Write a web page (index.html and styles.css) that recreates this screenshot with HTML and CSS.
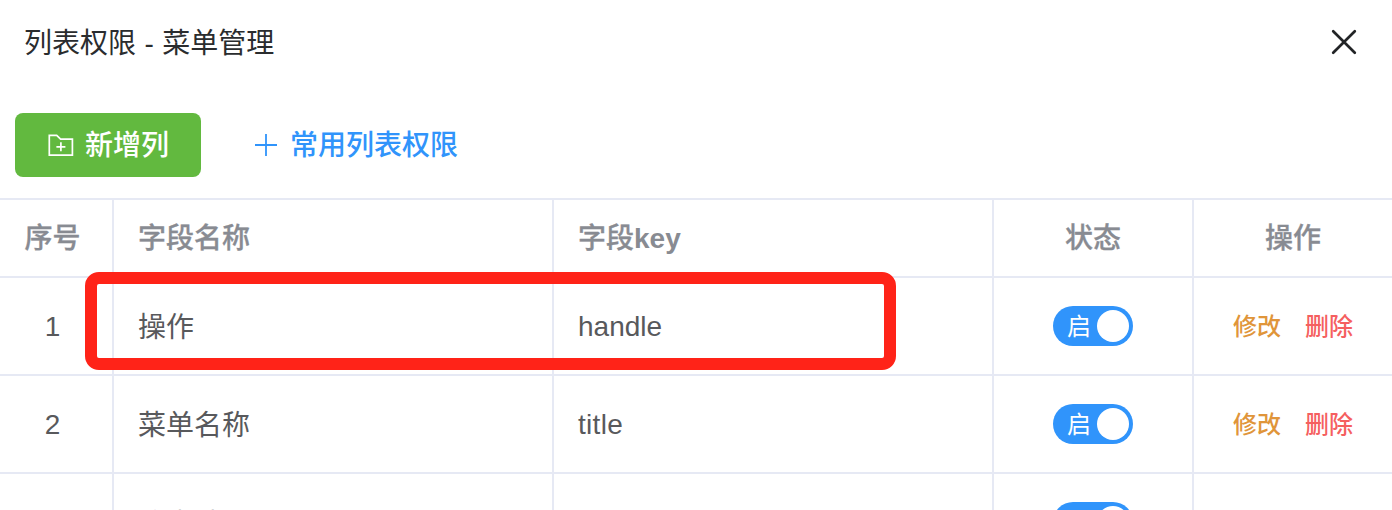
FILE: index.html
```html
<!DOCTYPE html>
<html lang="zh-CN">
<head>
<meta charset="utf-8">
<title>列表权限 - 菜单管理</title>
<link rel="stylesheet" href="styles.css">
</head>
<body>
<section class="dialog">
  <header class="dialog-header">
    <h1 class="title">列表权限 - 菜单管理</h1>
    <button class="close" aria-label="关闭">
      <svg width="28" height="28" viewBox="0 0 28 28" fill="none" stroke="#222426" stroke-width="2.7" stroke-linecap="round"><path d="M3.2 3.2 24.8 24.8M24.8 3.2 3.2 24.8"/></svg>
    </button>
  </header>
  <div class="toolbar">
    <button class="btn btn-success">
      <svg width="28" height="28" viewBox="0 0 28 28" fill="none" stroke="#fff" stroke-width="1.7"><path d="M2.3 4.4H9.7L13.6 8.1H25.4V24.1H2.3Z"/><path d="M13.9 11.3v9M9.4 15.8h9"/></svg>
      <span class="btn-text">新增列</span>
    </button>
    <button class="btn btn-link">
      <svg width="28" height="28" viewBox="0 0 28 28" fill="none" stroke="#3094fb" stroke-width="1.8"><path d="M14 3v22M3 14h22"/></svg>
      <span class="btn-text">常用列表权限</span>
    </button>
  </div>
  <div class="table">
    <div class="row head">
      <div class="cell index">序号</div>
      <div class="cell">字段名称</div>
      <div class="cell">字段<b>key</b></div>
      <div class="cell center">状态</div>
      <div class="cell center">操作</div>
    </div>
    <div class="row">
      <div class="cell index">1</div>
      <div class="cell name">操作</div>
      <div class="cell key">handle</div>
      <div class="cell center state"><span class="switch"><span class="switch-text">启</span><span class="knob"></span></span></div>
      <div class="cell center actions"><a class="edit">修改</a><a class="delete">删除</a></div>
    </div>
    <div class="row">
      <div class="cell index">2</div>
      <div class="cell name">菜单名称</div>
      <div class="cell key title-key">title</div>
      <div class="cell center state"><span class="switch"><span class="switch-text">启</span><span class="knob"></span></span></div>
      <div class="cell center actions"><a class="edit">修改</a><a class="delete">删除</a></div>
    </div>
    <div class="row">
      <div class="cell index"></div>
      <div class="cell name last-name">路由地址</div>
      <div class="cell key"></div>
      <div class="cell center state"><span class="switch"><span class="knob"></span></span></div>
      <div class="cell center actions"></div>
    </div>
    <div class="highlight"></div>
  </div>
</section>
</body>
</html>
```

FILE: styles.css
```css
* { box-sizing: border-box; }
body {
  margin: 0;
  background: #fff;
  color: #58595c;
  font: 28px/40px "Liberation Sans", "Noto Sans CJK SC", sans-serif;
}
button { border: 0; padding: 0; background: none; font: inherit; }
svg { display: block; flex: none; }
.dialog { height: 510px; overflow: hidden; }
.dialog-header {
  display: flex;
  align-items: center;
  justify-content: space-between;
  height: 84px;
  padding: 0 34px 0 24px;
}
.title {
  margin: 0;
  padding-top: 4px;
  font-size: 28px;
  font-weight: 400;
  word-spacing: 0.7px;
  color: #2a2c2e;
}
.toolbar { display: flex; gap: 51px; height: 114px; padding: 29px 15px 0; }
.btn { display: flex; align-items: center; height: 64px; font-weight: 500; gap: 10px; }
.btn-text { padding-top: 2px; }
.btn-success { width: 186px; padding-left: 32px; border-radius: 8px; background: #62b93f; color: #fff; }
.btn-link { color: #3094fb; }
.table { position: relative; border-top: 2px solid #e6e9f4; }
.row {
  display: grid;
  grid-template-columns: 114px 440px 440px 200px 198px;
  height: 98px;
  border-bottom: 2px solid #e6e9f4;
}
.head { height: 78px; font-weight: 500; color: #888b92; -webkit-text-stroke: 0.3px #888b92; }
.head b { -webkit-text-stroke: 0; }
.cell {
  display: flex;
  align-items: center;
  padding: 2px 24px 0;
  border-right: 2px solid #e6e9f4;
}
.head .cell { padding-top: 1px; }
.cell:last-child { border-right: 0; }
.center { justify-content: center; padding: 2px 0 0; }
.head .center { padding: 1px 0 0; }
.index, .head .index { justify-content: center; padding: 2px 7px 0 0; }
.name { padding-top: 4px; }
.last-name { padding-top: 6px; }
.title-key { letter-spacing: 0.3px; }
.state { padding-top: 0; }
.switch {
  display: flex;
  align-items: center;
  justify-content: space-between;
  width: 80px;
  height: 40px;
  padding: 0 4px 0 14px;
  border-radius: 20px;
  background: #3094fb;
  color: #fff;
  font-size: 24px;
}
.switch-text { padding-top: 2px; }
.knob { width: 32px; height: 32px; margin-left: auto; border-radius: 50%; background: #fff; }
.actions { gap: 24px; font-size: 24px; font-weight: 500; }
.edit { color: #e0953a; }
.delete { color: #f55f5f; }
.highlight {
  position: absolute;
  left: 85px;
  top: 72px;
  width: 811px;
  height: 98px;
  border: 12px solid #ff2318;
  border-radius: 14px;
}
```
